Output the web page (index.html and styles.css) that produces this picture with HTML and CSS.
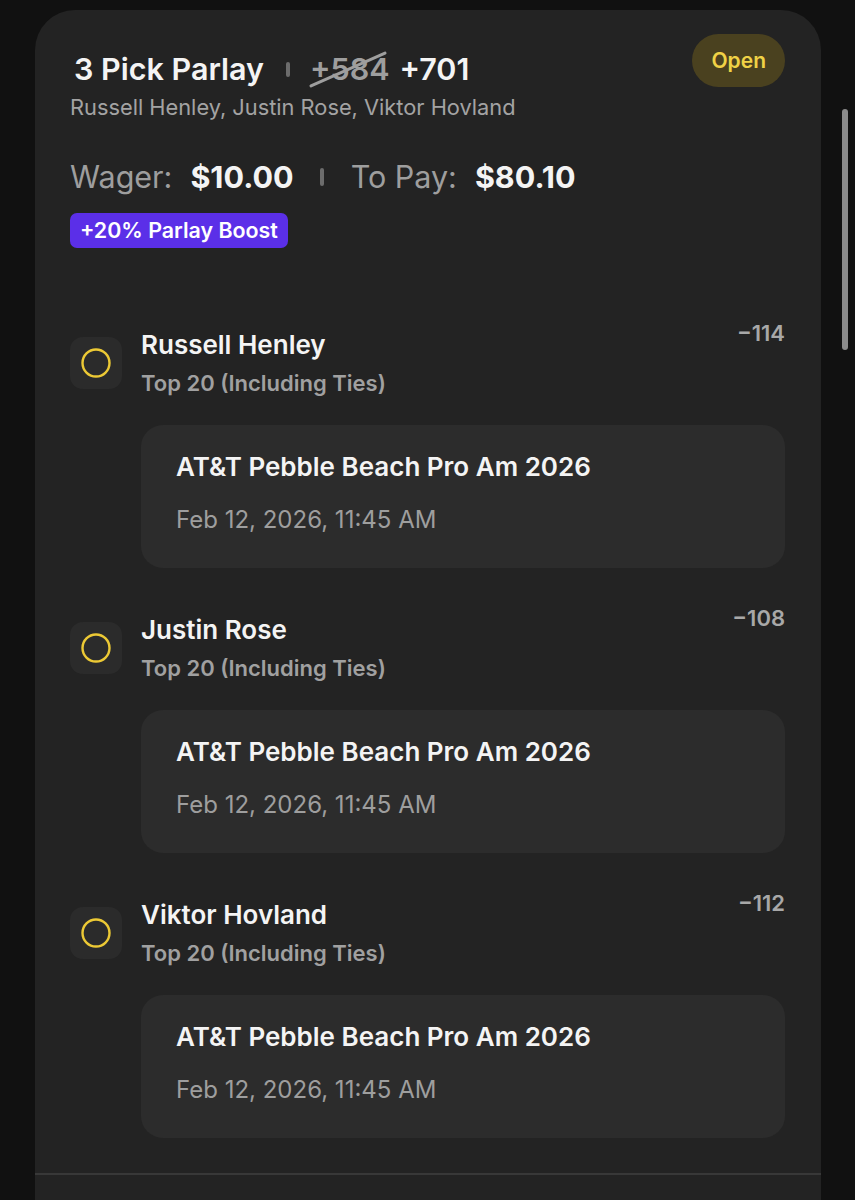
FILE: index.html
```html
<!DOCTYPE html>
<html lang="en">
<head>
  <meta charset="UTF-8" />
  <meta name="viewport" content="width=device-width, initial-scale=1.0" />
  <title>My Bets</title>
  <link rel="stylesheet" href="styles.css">
</head>
<body>
  <div class="scrollbar"></div>

  <main class="bet-card">
    <header class="bet-head">
      <div class="bet-info">
        <div class="bet-title">
          <span>3 Pick Parlay</span>
          <span class="pipe"></span>
          <span class="odds-old">+584</span>
          <span class="odds-new">+701</span>
        </div>
        <div class="bet-players">Russell Henley, Justin Rose, Viktor Hovland</div>
      </div>
      <span class="status">Open</span>
    </header>

    <div class="bet-amounts">
      <span class="label">Wager:</span><span class="value">$10.00</span>
      <span class="pipe"></span>
      <span class="label">To Pay:</span><span class="value">$80.10</span>
    </div>
    <div class="boost-row"><span class="boost">+20% Parlay Boost</span></div>

    <section class="legs">
      <div class="leg">
        <div class="leg-head">
          <div class="pick">
            <div class="pick-icon"><svg width="32" height="32" viewBox="0 0 32 32"><circle cx="16" cy="16" r="13.5" fill="none" stroke="#ecc935" stroke-width="2.4"/></svg></div>
            <div>
              <div class="pick-name">Russell Henley</div>
              <div class="pick-market">Top 20 (Including Ties)</div>
            </div>
          </div>
          <span class="leg-odds">−114</span>
        </div>
        <div class="event">
          <div class="event-name">AT&amp;T Pebble Beach Pro Am 2026</div>
          <div class="event-time">Feb 12, 2026, 11:45 AM</div>
        </div>
      </div>

      <div class="leg">
        <div class="leg-head">
          <div class="pick">
            <div class="pick-icon"><svg width="32" height="32" viewBox="0 0 32 32"><circle cx="16" cy="16" r="13.5" fill="none" stroke="#ecc935" stroke-width="2.4"/></svg></div>
            <div>
              <div class="pick-name">Justin Rose</div>
              <div class="pick-market">Top 20 (Including Ties)</div>
            </div>
          </div>
          <span class="leg-odds">−108</span>
        </div>
        <div class="event">
          <div class="event-name">AT&amp;T Pebble Beach Pro Am 2026</div>
          <div class="event-time">Feb 12, 2026, 11:45 AM</div>
        </div>
      </div>

      <div class="leg">
        <div class="leg-head">
          <div class="pick">
            <div class="pick-icon"><svg width="32" height="32" viewBox="0 0 32 32"><circle cx="16" cy="16" r="13.5" fill="none" stroke="#ecc935" stroke-width="2.4"/></svg></div>
            <div>
              <div class="pick-name">Viktor Hovland</div>
              <div class="pick-market">Top 20 (Including Ties)</div>
            </div>
          </div>
          <span class="leg-odds">−112</span>
        </div>
        <div class="event">
          <div class="event-name">AT&amp;T Pebble Beach Pro Am 2026</div>
          <div class="event-time">Feb 12, 2026, 11:45 AM</div>
        </div>
      </div>
    </section>

    <div class="card-foot"></div>
  </main>
</body>
</html>
```

FILE: styles.css
```css
:root {
  --page: #111111;
  --card: #232323;
  --inset: #2c2c2c;
  --text: #f4f4f4;
  --muted: #9e9e9e;
  --pipe: #6c6c6c;
  --yellow: #f0d246;
  --purple: #5b2fe8;
}

html, body { height: 100%; margin: 0; overflow: hidden; }
body {
  font-family: Inter, "Noto Sans", sans-serif;
  background: var(--page);
  color: var(--text);
}

.scrollbar { position: fixed; right: 7px; top: 109px; width: 6px; height: 241px; border-radius: 3px; background: #8b8b8b; }

.bet-card { margin: 10px 34px 0 35px; padding: 24px 36px 0 35px; background: var(--card); border-radius: 40px 40px 0 0; }

/* header */
.bet-head { display: flex; justify-content: space-between; align-items: flex-start; }
.bet-info { padding-top: 16px; }
.bet-title { display: flex; align-items: center; padding-left: 4px; font-size: 30.5px; font-weight: 600; line-height: 38px; }
.pipe { width: 4px; height: 15px; border-radius: 2px; background: var(--pipe); margin: 0 20px 0 22px; }
.odds-old { position: relative; color: var(--muted); }
.odds-old::after { content: ""; position: absolute; left: -4px; top: calc(50% - 1px); width: 84px; height: 3px; border-radius: 2px; background: var(--muted); transform: rotate(-24deg); }
.odds-new { margin-left: 10px; }
.bet-players { margin-top: 6px; font-size: 21.8px; line-height: 26px; color: #a3a3a3; }
.status { height: 53px; padding: 0 19px; border-radius: 27px; background: #4a411f; color: var(--yellow); font-size: 21px; font-weight: 600; line-height: 53px; }

/* amounts */
.bet-amounts { display: flex; align-items: center; margin-top: 38px; font-size: 30.5px; line-height: 38px; }
.bet-amounts .label { color: var(--muted); margin-right: 18px; }
.bet-amounts .value { font-weight: 700; }
.bet-amounts .pipe { height: 18px; margin: 0 27px 0 26px; }
.boost-row { display: flex; margin-top: 17px; }
.boost { height: 35px; padding: 0 10px; border-radius: 7px; background: var(--purple); color: #fff; font-size: 21.4px; font-weight: 600; line-height: 35px; }

/* legs */
.legs { display: flex; flex-direction: column; gap: 37px; margin-top: 72px; }
.leg-head { display: flex; justify-content: space-between; align-items: flex-start; }
.pick { display: flex; align-items: center; gap: 19px; margin-top: 9px; }
.pick-icon { width: 52px; height: 52px; border-radius: 13px; background: #2b2b2b; display: flex; align-items: center; justify-content: center; }
.pick-name { font-size: 26px; font-weight: 600; line-height: 32px; }
.pick-market { margin-top: 9px; font-size: 22px; font-weight: 600; line-height: 26px; color: #a0a0a0; }
.leg-odds { font-size: 22px; font-weight: 600; line-height: 26px; color: #a8a8a8; }
.event { margin: 29px 0 0 71px; padding: 26px 35px 33px; border-radius: 22px; background: var(--inset); }
.event-name { font-size: 26px; font-weight: 600; line-height: 32px; }
.event-time { margin-top: 22px; font-size: 24px; line-height: 30px; color: var(--muted); }

.card-foot { height: 120px; margin: 35px -36px 0 -35px; border-top: 2px solid #383838; }
```
